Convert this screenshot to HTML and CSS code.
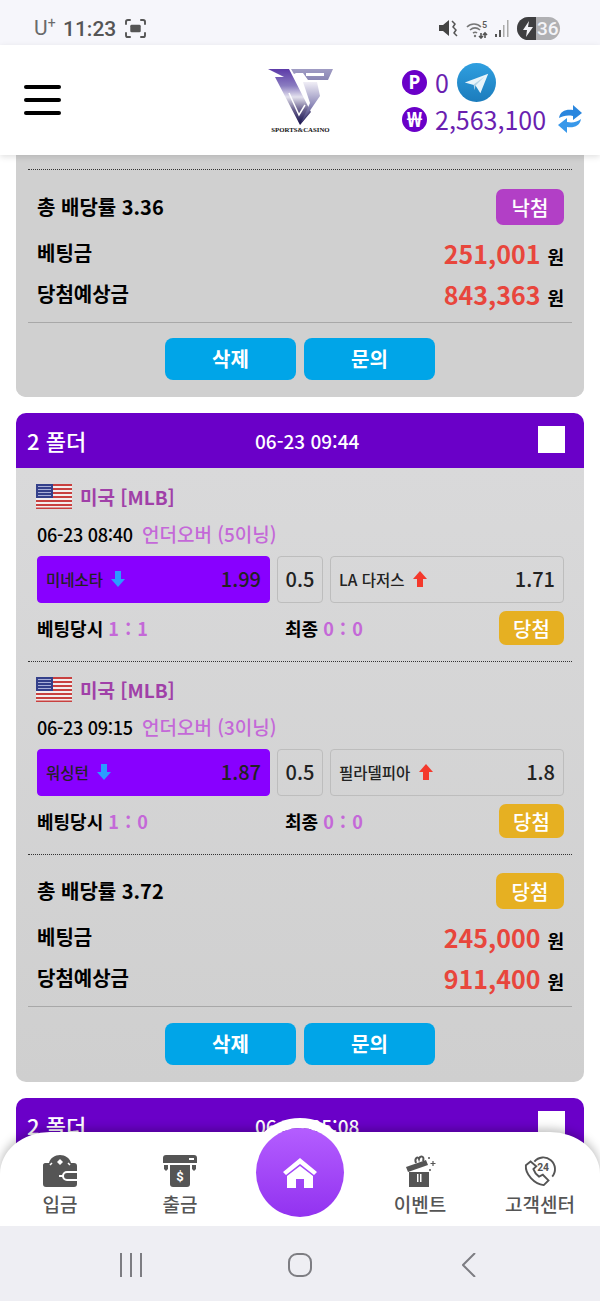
FILE: index.html
```html
<!DOCTYPE html>
<html lang="ko">
<head>
<meta charset="utf-8">
<title>Sports &amp; Casino</title>
<link rel="stylesheet" href="styles.css">
</head>
<body>
<svg class="defs" width="0" height="0" aria-hidden="true">
  <defs>
    <symbol id="flag" viewBox="0 0 36 25">
      <rect width="36" height="25" fill="#f2eeee"/>
      <g fill="#c8403f"><rect width="36" height="2"/><rect y="4" width="36" height="2"/><rect y="8" width="36" height="2"/><rect y="12" width="36" height="2"/><rect y="16" width="36" height="2"/><rect y="20" width="36" height="2"/><rect y="23.5" width="36" height="1.5"/></g>
      <rect width="17" height="14" fill="#34408a"/>
      <g fill="#aab0d8"><rect x="2" y="2" width="13" height="1"/><rect x="2" y="5" width="13" height="1"/><rect x="2" y="8" width="13" height="1"/><rect x="2" y="11" width="13" height="1"/></g>
    </symbol>
    <symbol id="down" viewBox="0 0 14 16"><path d="M4 0h6v8h4L7 16 0 8h4z" fill="#2a9cff"/></symbol>
    <symbol id="up" viewBox="0 0 14 16"><path d="M4 16h6V8h4L7 0 0 8h4z" fill="#f4392c"/></symbol>
  </defs>
</svg>
<div class="phone">
  <div class="status">
    <div class="status-left">
      <span class="carrier">U<sup>+</sup></span>
      <span class="clock">11:23</span>
      <svg class="shot" viewBox="0 0 22 20" fill="none" stroke="#555" stroke-width="2"><path d="M1 6V3a2 2 0 0 1 2-2h3M16 1h3a2 2 0 0 1 2 2v3M21 14v3a2 2 0 0 1-2 2h-3M6 19H3a2 2 0 0 1-2-2v-3"/><rect x="5.5" y="6" width="11" height="8" rx="1.5" fill="#555" stroke="none"/></svg>
    </div>
    <div class="status-right">
      <svg class="mute" viewBox="0 0 20 20"><path d="M0 6h4l6-5v16l-6-5H0z" fill="#444"/><path d="M13 2l3 3-2 3 3 3-2 3 3 3" fill="none" stroke="#555" stroke-width="1.5"/></svg>
      <svg class="wifi" viewBox="0 0 24 20" fill="none" stroke="#777" stroke-width="1.6"><path d="M1 8c4-4 10-4 14 0M4 11c3-2.500 7-2.500 10 0M7 14c1.500-1 3-1 4 0"/><circle cx="9" cy="17" r="1.200" fill="#777" stroke="none"/><path d="M15 14v5M19 19v-5M17 16l2-2 2 2M13 17l2 2 2-2" stroke="#555"/><text x="16" y="9" class="wifi-five">5</text></svg>
      <svg class="signal" viewBox="0 0 16 19"><rect x="0" y="15" width="2" height="3" fill="#555"/><rect x="4" y="11" width="2" height="7" fill="#555"/><rect x="8" y="6" width="1.500" height="12" fill="#aaa"/><rect x="12" y="1" width="1.500" height="17" fill="#aaa"/></svg>
      <div class="battery"><span class="bolt-side"><svg viewBox="0 0 10 16" width="10" height="16"><path d="M6 0L0 9h4l-1 7 7-10H5z" fill="#f4f4f8"/></svg></span><span class="level">36</span></div>
    </div>
  </div>

  <header class="topbar">
    <div class="burger"><i></i><i></i><i></i></div>
    <div class="logo">
      <svg viewBox="0 0 65 56" width="65" height="56">
        <defs>
          <linearGradient id="lg1" x1="0" y1="0" x2="0" y2="1"><stop offset="0" stop-color="#5c3aa8"/><stop offset=".3" stop-color="#8a7cc0"/><stop offset=".5" stop-color="#e4e2ee"/><stop offset=".72" stop-color="#6c6490"/><stop offset="1" stop-color="#100c48"/></linearGradient>
          <linearGradient id="lg2" x1="0" y1="0" x2="0" y2="1"><stop offset="0" stop-color="#a09cc4"/><stop offset="1" stop-color="#8a86b4"/></linearGradient>
          <linearGradient id="lg3" x1="0" y1="0" x2="0" y2="1"><stop offset="0" stop-color="#f0eef6"/><stop offset=".55" stop-color="#8c88b8"/><stop offset="1" stop-color="#2c2860"/></linearGradient>
        </defs>
        <path d="M0 0h21l22 43-11 13L7 8h9z" fill="url(#lg1)"/>
        <path d="M23 0h42l-5 11H40L35 4h-7l-2 1z" fill="url(#lg2)"/>
        <rect x="38" y="4" width="18" height="3" fill="#fff"/>
        <path d="M35 13l14 0 3 14-20 29 10-22z" fill="url(#lg3)"/>
        <path d="M21 24l10 22 6-10" fill="none" stroke="#fff" stroke-width="1.500"/>
      </svg>
      <span class="logo-text">SPORTS&amp;CASINO</span>
    </div>
    <div class="wallet">
      <div class="wallet-row">
        <span class="coin">P</span><span class="amount">0</span>
        <svg class="telegram" viewBox="0 0 40 40"><defs><linearGradient id="tg" x1="0" y1="0" x2="0" y2="1"><stop offset="0" stop-color="#2f9fe0"/><stop offset="1" stop-color="#1c7cbc"/></linearGradient></defs><circle cx="20" cy="20" r="20" fill="url(#tg)"/><path d="M8 20l24-9-8 20-5-8z" fill="#e8f4fa"/><path d="M19 23l9-9-11 8 1 6z" fill="#b4d4e6"/></svg>
      </div>
      <div class="wallet-row">
        <span class="coin coin-won">₩</span><span class="amount">2,563,100</span>
        <svg class="refresh" viewBox="0 0 26 30"><path d="M2 14C3 7 9 5 16 6V1l9 8-9 7v-4c-6-1-10 0-14 2z" fill="#2a86de"/><path d="M24 15c-1 7-7 9-14 8v6l-9-8 9-7v4c6 1 10 0 14-3z" fill="#3898ea"/></svg>
      </div>
    </div>
  </header>

  <div class="stage">
    <main class="list">
      <section class="card card-clipped">
        <div class="card-body">
          <div class="rule-dotted"></div>
          <div class="summary">
            <div class="summary-top"><span class="total">총 배당률 3.36</span><span class="badge badge-lose">낙첨</span></div>
            <div class="money"><span>베팅금</span><span class="sum"><b>251,001</b> 원</span></div>
            <div class="money"><span>당첨예상금</span><span class="sum"><b>843,363</b> 원</span></div>
          </div>
          <div class="rule-solid"></div>
          <div class="actions"><button class="action">삭제</button><button class="action">문의</button></div>
        </div>
      </section>

      <section class="card">
        <div class="card-head"><span class="fold">2 폴더</span><span class="when">06-23 09:44</span><span class="check"></span></div>
        <div class="card-body">
          <div class="game">
            <div class="league"><svg class="flag"><use href="#flag"/></svg><span>미국 [MLB]</span></div>
            <div class="meta"><span class="date">06-23 08:40</span><span class="market">언더오버 (5이닝)</span></div>
            <div class="odds">
              <div class="pick pick-on"><span class="team">미네소타 <svg class="arrow"><use href="#down"/></svg></span><span class="rate">1.99</span></div>
              <div class="line">0.5</div>
              <div class="pick"><span class="team">LA 다저스 <svg class="arrow"><use href="#up"/></svg></span><span class="rate">1.71</span></div>
            </div>
            <div class="score">
              <span class="score-a">베팅당시 <em>1 : 1</em></span>
              <span class="score-b">최종 <em>0 : 0</em></span>
              <span class="badge badge-win">당첨</span>
            </div>
          </div>
          <div class="rule-dotted"></div>
          <div class="game">
            <div class="league"><svg class="flag"><use href="#flag"/></svg><span>미국 [MLB]</span></div>
            <div class="meta"><span class="date">06-23 09:15</span><span class="market">언더오버 (3이닝)</span></div>
            <div class="odds">
              <div class="pick pick-on"><span class="team">워싱턴 <svg class="arrow"><use href="#down"/></svg></span><span class="rate">1.87</span></div>
              <div class="line">0.5</div>
              <div class="pick"><span class="team">필라델피아 <svg class="arrow"><use href="#up"/></svg></span><span class="rate">1.8</span></div>
            </div>
            <div class="score">
              <span class="score-a">베팅당시 <em>1 : 0</em></span>
              <span class="score-b">최종 <em>0 : 0</em></span>
              <span class="badge badge-win">당첨</span>
            </div>
          </div>
          <div class="rule-dotted"></div>
          <div class="summary">
            <div class="summary-top"><span class="total">총 배당률 3.72</span><span class="badge badge-win">당첨</span></div>
            <div class="money"><span>베팅금</span><span class="sum"><b>245,000</b> 원</span></div>
            <div class="money"><span>당첨예상금</span><span class="sum"><b>911,400</b> 원</span></div>
          </div>
          <div class="rule-solid"></div>
          <div class="actions"><button class="action">삭제</button><button class="action">문의</button></div>
        </div>
      </section>

      <section class="card">
        <div class="card-head"><span class="fold">2 폴더</span><span class="when">06-23 05:08</span><span class="check"></span></div>
      </section>
    </main>

    <nav class="tabs">
      <a class="tab">
        <svg class="tab-icon" viewBox="0 0 34 32"><path d="M2 8h4C7 3 12 0 17 0s10 3 11 8h3c2 0 3 1 3 3v5H24a5 5 0 0 0 0 10h10v3c0 2-1 3-3 3H3c-2 0-3-1-3-3V10c0-1 1-2 2-2z" fill="#555"/><path d="M7 10l2-2M27 10l-2-2" stroke="#fff" stroke-width="1.500"/><path d="M17 4l3 3-3 3-3-3z" fill="#fff"/><rect x="16" y="20" width="5" height="2" fill="#fff"/><path d="M34 18h-10a3 3 0 0 0 0 6h10z" fill="#555"/></svg>
        <span>입금</span>
      </a>
      <a class="tab">
        <svg class="tab-icon" viewBox="0 0 34 32"><path d="M3 0h28c2 0 3 1 3 3v5H0V3c0-2 1-3 3-3z" fill="#555"/><rect x="26" y="3" width="5" height="2" fill="#fff"/><path d="M1 10h4v4l-2 2-2-2zM29 10h4v4l-2 2-2-2z" fill="#555"/><path d="M7 10h20v19c0 2-1 3-3 3H10c-2 0-3-1-3-3z" fill="#555"/><text x="17" y="26" class="dollar">$</text></svg>
        <span>출금</span>
      </a>
      <a class="tab tab-home" aria-label="홈">
        <span class="home-disc"><svg viewBox="0 0 34 30" width="34" height="30"><path d="M17 0L0 14l3 3L17 6l14 11 3-3z" fill="#fff"/><path d="M4 18L17 8l13 10v12H21v-9h-8v9H4z" fill="#fff"/></svg></span>
      </a>
      <a class="tab">
        <svg class="tab-icon" viewBox="0 0 34 32"><path d="M3 12L23 5l2 5L5 17z" fill="#555"/><path d="M6 17h20v15H6z" fill="#555"/><rect x="14" y="19" width="1.500" height="8" fill="#fff"/><rect x="17" y="19" width="1.500" height="8" fill="#fff"/><path d="M13 8c-2-5 2-7 3-4 1-4 6-3 4 2" fill="none" stroke="#555" stroke-width="2"/><path d="M30 6v5M27.500 8.500h5" stroke="#555" stroke-width="1.200"/><circle cx="26" cy="3" r="1" fill="#555"/><circle cx="27" cy="15" r="1" fill="#555"/></svg>
        <span>이벤트</span>
      </a>
      <a class="tab">
        <svg class="tab-icon" viewBox="0 0 34 34" fill="none" stroke="#555" stroke-width="2"><path d="M7 7L2 11c-1 9 9 20 19 21l5-5-6-6-4 2c-3-2-5-5-6-8l3-3z"/><path d="M11 7a12 12 0 1 1 19 16"/><text x="14" y="17" class="twentyfour">24</text></svg>
        <span>고객센터</span>
      </a>
    </nav>
  </div>

  <div class="softkeys">
    <svg class="key key-recent" viewBox="0 0 24 24" fill="none" stroke="#7d7d82" stroke-width="2"><path d="M2 0v24M12 0v24M22 0v24"/></svg>
    <svg class="key key-home" viewBox="0 0 24 24" fill="none" stroke="#7d7d82" stroke-width="2"><rect x="1" y="1" width="22" height="22" rx="8"/></svg>
    <svg class="key key-back" viewBox="0 0 14 24" fill="none" stroke="#7d7d82" stroke-width="2"><path d="M13 0L1 12l12 12"/></svg>
  </div>
</div>
</body>
</html>
```
FILE: styles.css
```css
* { box-sizing: border-box; }
html, body { margin: 0; padding: 0; background: #fff; }
body { font-family: "Noto Sans CJK KR", "Noto Sans", sans-serif; color: #000; }
.defs { position: absolute; }
.phone { width: 600px; height: 1301px; display: flex; flex-direction: column; overflow: hidden; }

/* status bar */
.status { height: 45px; flex: none; background: #f6f6fb; display: flex; justify-content: space-between; align-items: center; padding: 12px 40px 0 34px; font-family: Roboto, sans-serif; color: #555; }
.status-left { display: flex; align-items: center; }
.carrier { font-size: 21px; color: #6a6a6a; width: 29px; line-height: 1; }
.carrier sup { font-size: 14px; line-height: 0; vertical-align: 7px; }
.clock { font-size: 21px; font-weight: 500; width: 62px; }
.shot { width: 21px; height: 19px; }
.status-right { display: flex; align-items: center; }
.mute { width: 20px; height: 20px; margin-right: 7px; }
.wifi { width: 24px; height: 20px; margin-right: 5px; }
.wifi-five { font: 500 9px Roboto, sans-serif; fill: #555; stroke: none; }
.signal { width: 16px; height: 19px; margin-right: 6px; }
.battery { width: 43px; height: 23px; border-radius: 12px; overflow: hidden; display: flex; background: #b0b0b3; }
.bolt-side { width: 19px; background: #3f3f41; display: flex; align-items: center; justify-content: center; padding-left: 3px; }
.level { font-size: 19px; font-weight: 500; color: #f4f4f8; line-height: 23px; margin-left: 1px; }

/* header */
.topbar { height: 110px; flex: none; background: #fff; display: flex; align-items: center; padding-left: 24px; position: relative; z-index: 2; box-shadow: 0 2px 6px rgba(0,0,0,.12); }
.burger { width: 37px; display: flex; flex-direction: column; gap: 9px; }
.burger i { display: block; height: 4px; border-radius: 2px; background: #000; }
.logo { width: 65px; margin-left: 207px; display: flex; flex-direction: column; align-items: center; margin-top: 4px; }
.logo svg { display: block; }
.logo-text { font: 700 6.800px/10px "Liberation Serif", serif; white-space: nowrap; color: #111; }
.wallet { margin-left: 69px; display: flex; flex-direction: column; margin-top: 1px; }
.wallet-row { display: flex; align-items: center; height: 37px; }
.coin { width: 25px; height: 25px; border-radius: 50%; background: #6a00c8; color: #fff; font: 700 19px/25px "Noto Sans", sans-serif; text-align: center; }
.coin-won { font-size: 21px; }
.amount { font-size: 25px; line-height: 37px; margin-left: 8px; color: #6a1fb0; }
.telegram { width: 39px; height: 39px; margin-left: 8px; }
.refresh { width: 26px; height: 30px; margin-left: 11px; }

/* scrolling area */
.stage { flex: 1; position: relative; overflow: hidden; background: #fff; }
.list { padding: 0 16px; display: flex; flex-direction: column; gap: 16px; }
.card { border-radius: 10px; overflow: hidden; }
.card-clipped { border-radius: 0 0 10px 10px; padding-top: 14px; background: #d0d0d0; }
.card-clipped .card-body { background: #d0d0d0; }
.card-clipped .summary { padding-top: 20px; }
.card-clipped .actions { padding: 15px 0 17px; }
.card-head { height: 55px; background: #6a00c8; color: #fff; display: flex; align-items: center; padding: 0 19px 0 11px; position: relative; }
.fold { font-size: 22px; font-weight: 500; padding-bottom: 2px; }
.when { font-size: 19px; font-weight: 500; position: absolute; left: 239px; }
.check { width: 27px; height: 27px; background: #fff; margin-left: auto; margin-top: -3px; }
.card-body { background: linear-gradient(#d9d9da, #cfcfcf); }

.rule-dotted { height: 1px; margin: 0 12px -1px; border-top: 1px dotted #333; }
.rule-solid { height: 1px; margin: 7px 12px 0; background: #a8a8a8; }

.game { padding: 16px 20px 16px 21px; }
.league { display: flex; align-items: center; height: 25px; font-size: 19px; font-weight: 700; color: #a040a8; }
.flag { width: 36px; height: 25px; margin: 0 8px 0 -1px; }
.meta { height: 28px; margin: 11px 0 8px; display: flex; align-items: center; line-height: 28px; }
.date { font-size: 18px; font-weight: 500; letter-spacing: -.3px; width: 105px; }
.market { font-size: 19px; font-weight: 500; color: #c468d8; }
.odds { display: grid; grid-template-columns: 233px 46px 234px; gap: 7px; height: 47px; }
.pick, .line { border: 1px solid #bdbdbd; border-radius: 4px; display: flex; align-items: center; padding-bottom: 2px; }
.pick { justify-content: space-between; padding-left: 8px; padding-right: 8px; }
.pick-on { background: #8800ff; border-color: #8800ff; }
.line { justify-content: center; font-size: 20px; font-weight: 500; color: #222; }
.team { font-size: 15.500px; font-weight: 500; display: flex; align-items: center; gap: 4px; white-space: pre; color: #222; }
.arrow { width: 14px; height: 16px; }
.rate { font-size: 20px; font-weight: 500; color: #222; }
.score { height: 34px; margin-top: 8px; display: flex; align-items: center; font-size: 18px; font-weight: 700; }
.score em { font-style: normal; color: #c468d8; letter-spacing: .6px; }
.score-a { width: 248px; }

.badge { display: flex; align-items: center; justify-content: center; color: #fff; font-size: 20px; font-weight: 500; border-radius: 7px; }
.badge-win { background: #e6b022; }
.badge-lose { background: #b23fc6; }
.score .badge { width: 65px; height: 34px; margin-left: auto; font-weight: 500; }
.summary { padding: 19px 20px 0 21px; }
.summary-top { display: flex; justify-content: space-between; align-items: center; height: 36px; margin-bottom: 8px; }
.summary-top .badge { width: 68px; height: 36px; }
.total { font-size: 20px; font-weight: 700; padding-bottom: 2px; }
.money { display: flex; justify-content: space-between; align-items: center; height: 41px; font-size: 20px; font-weight: 700; padding-bottom: 2px; }
.sum { font-size: 18px; }
.sum b { font-size: 25px; font-weight: 700; color: #e8463c; margin-right: 2px; }
.actions { display: flex; justify-content: center; gap: 8px; padding: 16px 0 17px; }
.action { width: 131px; height: 42px; border: 0; border-radius: 8px; background: #00a5e8; color: #fff; font-family: inherit; font-size: 20px; font-weight: 700; padding: 0 0 2px; }

/* bottom tab bar */
.tabs { position: absolute; left: 0; right: 0; bottom: 0; height: 94px; background: #fff; border-radius: 50px 50px 0 0 / 42px 42px 0 0; box-shadow: 0 -3px 10px rgba(0,0,0,.25); display: grid; grid-template-columns: repeat(5, 120px); z-index: 3; }
.tab { display: flex; flex-direction: column; align-items: center; padding-top: 23px; color: #555; font-size: 19px; font-weight: 500; line-height: 26px; }
.tab-icon { width: 34px; height: 32px; margin-bottom: 4px; }
.dollar { font: 700 13px Roboto, sans-serif; fill: #fff; text-anchor: middle; }
.twentyfour { font: 700 11px Roboto, sans-serif; fill: #555; stroke: none; }
.tab-home { position: relative; padding: 0; }
.home-disc { position: absolute; left: 16px; top: -4px; width: 88px; height: 89px; border-radius: 50%; background: linear-gradient(#b45eff, #9232f0); box-shadow: 0 0 0 10px #fff; display: flex; align-items: center; justify-content: center; }

/* android keys */
.softkeys { height: 75px; flex: none; background: #eeeef3; display: grid; grid-template-columns: 1fr 1fr 1fr; position: relative; align-items: center; justify-items: center; padding: 2px 47px 0; z-index: 4; }
.key { height: 24px; width: 24px; }
.key-back { width: 14px; }
```
